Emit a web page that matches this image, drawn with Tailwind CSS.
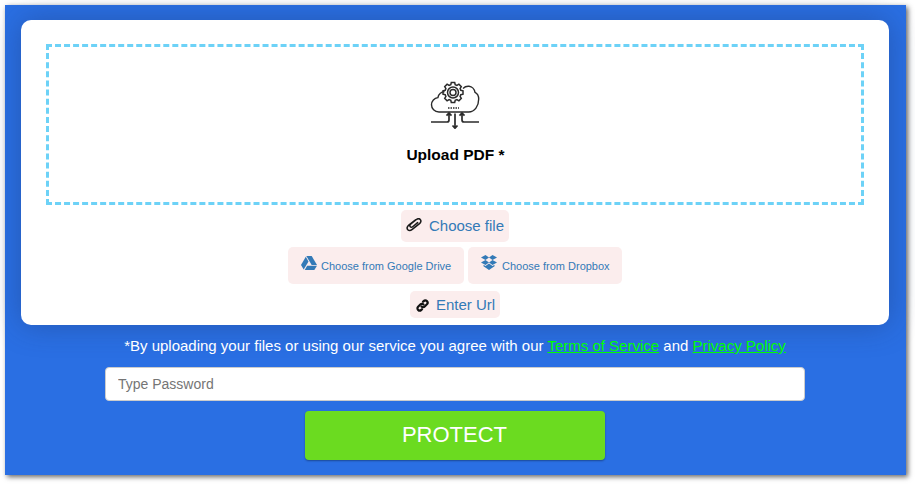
<!DOCTYPE html>
<html lang="en">
<head>
    <meta charset="UTF-8">
    <title>Protect PDF</title>
    <script src="https://cdn.jsdelivr.net/npm/@tailwindcss/browser@4"></script>
</head>
<body class="bg-white font-['Liberation_Sans',Arial,sans-serif] overflow-hidden">
    <div class="w-[915px] h-[484px] pt-[5px] pl-[5px]">
        <!-- Blue panel -->
        <main class="w-[901px] h-[470px] bg-[#2a6fe3] shadow-[2px_2px_5px_rgba(0,0,0,0.6)] pt-[15px] pl-[16px] pr-[17px] flex flex-col items-center">
            <!-- Upload card -->
            <section class="w-[868px] h-[305px] shrink-0 bg-white rounded-[10px] shadow-[0_0_30px_rgba(30,60,120,0.45)] pt-[24px] px-[25px] flex flex-col items-center">
                <div class="w-[818px] h-[161px] shrink-0 border-[3px] border-dashed border-[#6dd2f7] flex flex-col items-center pt-[32px]">
                    <svg width="50" height="50" viewBox="0 0 50 50" fill="none" stroke="#2b2b2b" stroke-width="1.4">
                        <path d="M11 33h-2c-4.500 0-7.500-3.300-7.500-7.200 0-3.800 2.800-6.800 6.400-7.200 0.600-3.600 3.700-6 6.600-5.800"/>
                        <path d="M33 9.500c1.500-1.500 3.500-2.500 6-2.200 3 0.300 5.500 3 6 6 2.500 1.200 3.700 3.700 3.700 6.700 0 7-4 13-10 13H11"/>
                        <g transform="translate(-1.500 -2)">
                            <circle cx="24.500" cy="15.500" r="3" stroke-width="1.500"/>
                            <circle cx="24.500" cy="15.500" r="5.500" stroke-width="1.500"/>
                            <path stroke-width="1.500" d="M22.800 5.500h3.400l.5 2.200 1.700.7 2-1.200 2.400 2.400-1.200 2 .7 1.700 2.200.5v3.400l-2.200.5-.7 1.700 1.200 2-2.400 2.400-2-1.200-1.700.7-.5 2.200h-3.400l-.5-2.200-1.700-.7-2 1.200-2.400-2.400 1.200-2-.7-1.700-2.200-.5v-3.400l2.200-.5.7-1.700-1.200-2 2.400-2.400 2 1.200 1.700-.7z"/>
                        </g>
                        <path stroke-width="1.500" stroke-dasharray="1.500 1" d="M18 29h11"/>
                        <path stroke-width="1.700" d="M1 43H17c1.200 0 2-.8 2-2v-7M16.500 36.700l2.500-2.700 2.500 2.700"/>
                        <path stroke-width="1.700" d="M49 43H34c-1.200 0-2-.8-2-2v-7M29.500 36.700l2.500-2.700 2.500 2.700"/>
                        <path stroke-width="1.700" d="M25 34.500v14.500M22.500 46.500 25 49.200l2.500-2.700"/>
                    </svg>
                    <p class="mt-[17px] ml-[1px] text-[15.5px] leading-[17px] font-bold text-black">Upload PDF *</p>
                </div>
                <!-- Upload sources -->
                <button class="mt-[5px] h-[32px] w-[108px] shrink-0 bg-[#fbeded] rounded-[5px] flex items-center pl-[5px] text-[#337ab7] text-[15px] whitespace-nowrap">
                    <svg class="mb-[3px]" width="16" height="14" viewBox="0 0 15 13.500" fill="none" stroke="#1a1a1a" stroke-width="1.500" stroke-linecap="round">
                        <path d="M9 1.800 2.500 6.800C.5 8.400.5 10.300 1.500 11.300c1.100 1.100 2.800.9 4.300-.3l7-5.600c1.600-1.300 1.700-3 .7-4-1-1-2.500-.9-4 .3l-5 4c-1.100.9-1.300 2.100-.6 2.800.7.700 1.600.5 2.600-.3L11 4.500"/>
                    </svg>
                    <span class="ml-[7px]">Choose file</span>
                </button>
                <div class="mt-[5px] flex gap-[4px] shrink-0">
                    <button class="h-[37px] w-[176px] bg-[#fbeded] rounded-[5px] flex items-center pl-[13px] text-[#337ab7] text-[11px] whitespace-nowrap">
                        <svg class="mb-[5px]" width="16" height="14" viewBox="0 0 16 14" fill="#337ab7">
                            <path d="M5.300 0h5.400l5.300 9h-5.300z"/>
                            <path d="M4.800 .8 7.500 5.400 2.700 13.500 0 9z"/>
                            <path d="M6.200 9.800H16L13.300 14H3.700z"/>
                        </svg>
                        <span class="ml-[4px] mt-[2px]">Choose from Google Drive</span>
                    </button>
                    <button class="h-[37px] w-[154px] bg-[#fbeded] rounded-[5px] flex items-center pl-[13px] text-[#337ab7] text-[11px] whitespace-nowrap">
                        <svg class="mb-[6px]" width="16" height="15" viewBox="0 0 16 15" fill="#337ab7">
                            <path d="M4.500 0 8 2.400 4.500 5 0 2.500z"/>
                            <path d="M11.500 0 16 2.500 11.500 5 8 2.400z"/>
                            <path d="M4.500 5 8 7.600 4.500 10 0 7.500z"/>
                            <path d="M11.500 5 16 7.500 11.500 10 8 7.600z"/>
                            <path d="M8 8.400 11.500 11 13.500 9.800v1.500L8 15l-5.500-3.700V9.800L4.500 11z"/>
                        </svg>
                        <span class="ml-[5px] mt-[2px]">Choose from Dropbox</span>
                    </button>
                </div>
                <button class="mt-[7px] h-[27px] w-[90px] shrink-0 bg-[#fbeded] rounded-[5px] flex items-center pl-[6px] pt-[2px] text-[#337ab7] text-[15px] whitespace-nowrap">
                    <svg width="13" height="13" viewBox="0 0 13 13" fill="none" stroke="#111" stroke-width="2.200" stroke-linecap="round">
                        <path d="M5.500 7.500c1 1 2.300.9 3.200 0l2.200-2.200c.9-.9.900-2.300 0-3.200s-2.300-.9-3.200 0L7 2.800"/>
                        <path d="M7.500 5.500c-1-1-2.300-.9-3.200 0L2.100 7.700c-.9.900-.9 2.300 0 3.200s2.300.9 3.200 0l.7-.7"/>
                    </svg>
                    <span class="ml-[7px]">Enter Url</span>
                </button>
            </section>
            <p class="mt-[12px] text-[15px] leading-[18px] text-white">*By uploading your files or using our service you agree with our <a href="#" class="underline text-[#00ff00]">Terms of Service</a> and <a href="#" class="underline text-[#00ff00]">Privacy Policy</a></p>
            <input type="text" placeholder="Type Password" class="mt-[12px] w-[700px] h-[34px] shrink-0 bg-white border border-[#ccc] rounded-[4px] px-[12px] text-[14px] text-[#555] placeholder:text-[#757575] outline-none">
            <button class="mt-[10px] w-[300px] h-[49px] shrink-0 bg-[#6bdb20] rounded-[4px] text-white text-[22px] pb-[2px] pr-[1px] shadow-[0_1px_2px_rgba(0,0,0,0.35)]">PROTECT</button>
        </main>
    </div>
</body>
</html>
